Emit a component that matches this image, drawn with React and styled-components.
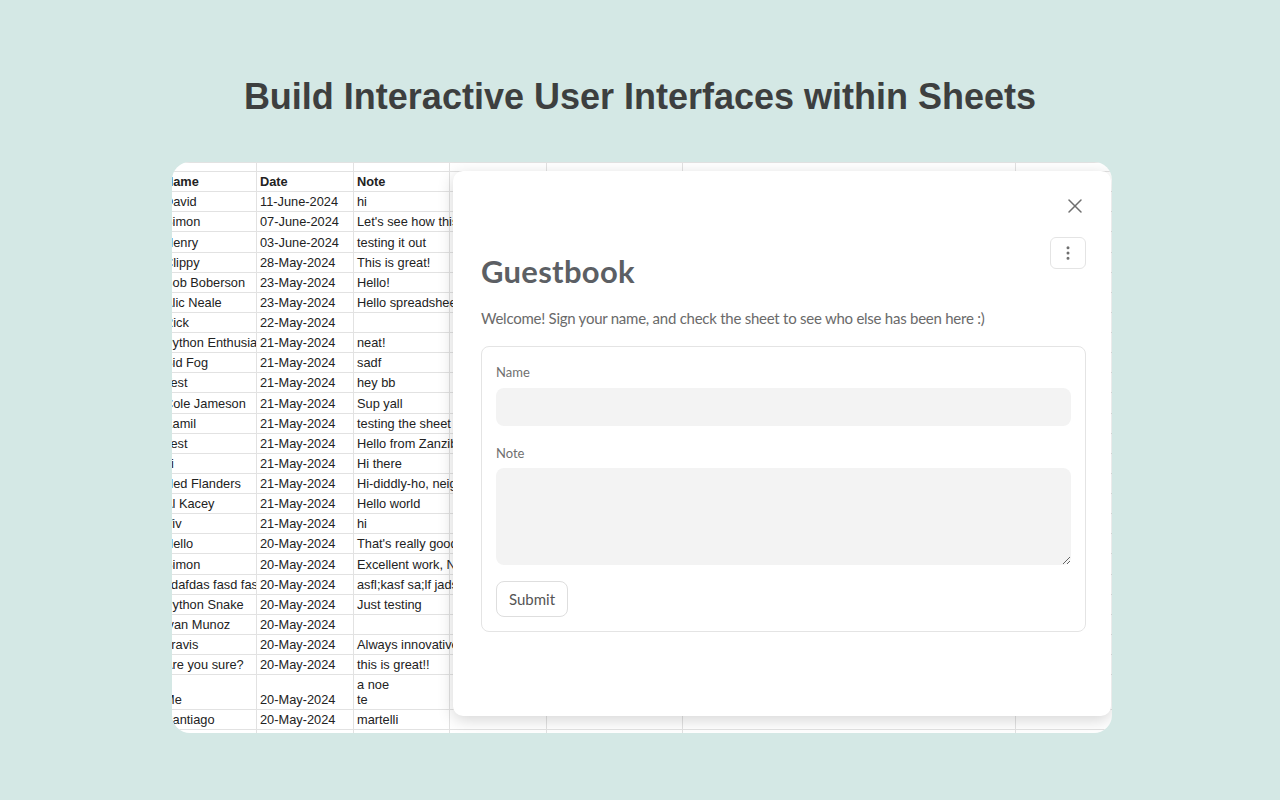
import React from 'react';
import styled, { createGlobalStyle } from 'styled-components';
import { X, EllipsisVertical } from 'lucide-react';

const GlobalStyle = createGlobalStyle`
  html, body { margin: 0; padding: 0; }
  body {
    background: #d4e8e5;
    font-family: "Liberation Sans", Arial, sans-serif;
  }
`;

const Page = styled.div`
  width: 1280px;
  height: 800px;
  display: flex;
  flex-direction: column;
  align-items: center;
`;

const Headline = styled.h1`
  margin: 76px 0 0;
  height: 42px;
  line-height: 42px;
  font-size: 36px;
  font-weight: 700;
  color: #3d3f3f;
`;

const Card = styled.div`
  position: relative;
  margin: 44px 0 0 4px;
  width: 940px;
  height: 571px;
  border-radius: 18px;
  overflow: hidden;
  background: #fff;
`;

const Sheet = styled.table`
  margin-left: -12px;
  border-collapse: collapse;
  table-layout: fixed;
  width: 975px;
  font-family: "Liberation Sans", Arial, sans-serif;
  font-size: 12.8px;
  color: #222;
`;

const Col = styled.col`
  width: ${(p) => p.$w}px;
`;

const Row = styled.tr`
  height: ${(p) => p.$h || 20.13}px;
`;

const Cell = styled.td`
  border: 1px solid #e2e2e2;
  padding: 0 3px 2px;
  line-height: 15px;
  vertical-align: bottom;
  white-space: pre;
  overflow: ${(p) => (p.$spill ? 'visible' : 'hidden')};
  font-weight: ${(p) => (p.$head ? 700 : 400)};
`;

const Dialog = styled.div`
  position: absolute;
  top: 9px;
  left: 281px;
  width: 658px;
  height: 545px;
  box-sizing: border-box;
  background: #fff;
  border-radius: 10px;
  box-shadow: 0 4px 16px rgba(0, 0, 0, 0.17);
  padding: 23px 24px 0 28px;
  display: flex;
  flex-direction: column;
  font-family: "Source Sans Pro", Lato, "Noto Sans", sans-serif;
`;

const CloseRow = styled.div`
  display: flex;
  justify-content: flex-end;
`;

const IconButton = styled.button`
  display: flex;
  align-items: center;
  justify-content: center;
  padding: 0;
  background: #fff;
  color: #6f6f6f;
  cursor: pointer;
  width: ${(p) => p.$w}px;
  height: ${(p) => p.$h}px;
  border: ${(p) => (p.$bordered ? '1px solid #e4e4e4' : 'none')};
  border-radius: 6px;
  box-sizing: border-box;
`;

const TitleRow = styled.div`
  margin: 19px 1px 0 0;
  display: flex;
  justify-content: space-between;
  align-items: flex-start;
`;

const Title = styled.h2`
  margin: 17px 0 0;
  font-size: 31px;
  line-height: 34px;
  letter-spacing: 0.3px;
  font-weight: 700;
  color: #5c5f64;
`;

const Lead = styled.p`
  margin: 18px 0 0;
  font-size: 15px;
  line-height: 24px;
  letter-spacing: -0.25px;
  color: #6a6a6a;
`;

const Form = styled.form`
  margin: 16px 1px 0 0;
  border: 1px solid #e4e4e4;
  border-radius: 8px;
  padding: 16px 14px 14px;
  display: flex;
  flex-direction: column;
  align-items: flex-start;
`;

const Label = styled.label`
  font-size: 13px;
  line-height: 18px;
  color: #707070;
  margin-top: ${(p) => p.$mt || 0}px;
`;

const TextInput = styled.input`
  margin-top: 7px;
  width: 100%;
  height: 38px;
  box-sizing: border-box;
  border: none;
  border-radius: 8px;
  background: #f3f3f3;
  outline: none;
`;

const TextArea = styled.textarea`
  margin-top: 6px;
  width: 100%;
  height: 97px;
  box-sizing: border-box;
  border: none;
  border-radius: 8px;
  background: #f3f3f3;
  outline: none;
`;

const SubmitButton = styled.button`
  margin-top: 16px;
  height: 36px;
  padding: 0 12px;
  border: 1px solid #dedede;
  border-radius: 8px;
  background: #fff;
  font-family: "Source Sans Pro", Lato, "Noto Sans", sans-serif;
  font-size: 15px;
  color: #555;
`;

const rows = [
  ['David', '11-June-2024', 'hi'],
  ['Simon', '07-June-2024', "Let's see how this works"],
  ['Henry', '03-June-2024', 'testing it out'],
  ['Clippy', '28-May-2024', 'This is great!'],
  ['Bob Boberson', '23-May-2024', 'Hello!'],
  ['Alic Neale', '23-May-2024', 'Hello spreadsheet'],
  ['Rick', '22-May-2024', ''],
  ['Python Enthusiast', '21-May-2024', 'neat!'],
  ['Sid Fog', '21-May-2024', 'sadf'],
  ['Test', '21-May-2024', 'hey bb'],
  ['Cole Jameson', '21-May-2024', 'Sup yall'],
  ['Kamil', '21-May-2024', 'testing the sheet'],
  ['Test', '21-May-2024', 'Hello from Zanzibar'],
  ['Li', '21-May-2024', 'Hi there'],
  ['Ned Flanders', '21-May-2024', 'Hi-diddly-ho, neighborino'],
  ['Al Kacey', '21-May-2024', 'Hello world'],
  ['Viv', '21-May-2024', 'hi'],
  ['Hello', '20-May-2024', "That's really good"],
  ['Simon', '20-May-2024', 'Excellent work, Nick'],
  ['adafdas fasd fasd', '20-May-2024', 'asfl;kasf sa;lf jadsf'],
  ['Python Snake', '20-May-2024', 'Just testing'],
  ['Ivan Munoz', '20-May-2024', ''],
  ['Travis', '20-May-2024', 'Always innovative'],
  ['Are you sure?', '20-May-2024', 'this is great!!'],
  ['Me', '20-May-2024', 'a noe\nte', 35],
  ['Santiago', '20-May-2024', 'martelli'],
  ['', '', ''],
];

const widths = [96, 97, 96, 97, 136, 333, 120];

function SheetRow({ cells, head, h }) {
  return (
    <Row $h={h}>
      {widths.map((_, i) => (
        <Cell key={i} $head={head} $spill={i === 2}>{cells[i] || ''}</Cell>
      ))}
    </Row>
  );
}

export default function App() {
  return (
    <>
      <GlobalStyle />
      <Page>
        <Headline>Build Interactive User Interfaces within Sheets</Headline>
        <Card>
          <Sheet>
            <colgroup>
              {widths.map((w, i) => (
                <Col key={i} $w={w} />
              ))}
            </colgroup>
            <tbody>
              <SheetRow cells={[]} h={9} />
              <SheetRow cells={['Name', 'Date', 'Note']} head />
              {rows.map((r, i) => (
                <SheetRow key={i} cells={r} h={r[3]} />
              ))}
            </tbody>
          </Sheet>
          <Dialog>
            <CloseRow>
              <IconButton $w={24} $h={24} aria-label="Close">
                <X size={24} strokeWidth={1.5} />
              </IconButton>
            </CloseRow>
            <TitleRow>
              <Title>Guestbook</Title>
              <IconButton $w={36} $h={32} $bordered aria-label="More">
                <EllipsisVertical size={18} strokeWidth={2} />
              </IconButton>
            </TitleRow>
            <Lead>Welcome! Sign your name, and check the sheet to see who else has been here :)</Lead>
            <Form onSubmit={(e) => e.preventDefault()}>
              <Label>Name</Label>
              <TextInput type="text" />
              <Label $mt={18}>Note</Label>
              <TextArea />
              <SubmitButton type="submit">Submit</SubmitButton>
            </Form>
          </Dialog>
        </Card>
      </Page>
    </>
  );
}
